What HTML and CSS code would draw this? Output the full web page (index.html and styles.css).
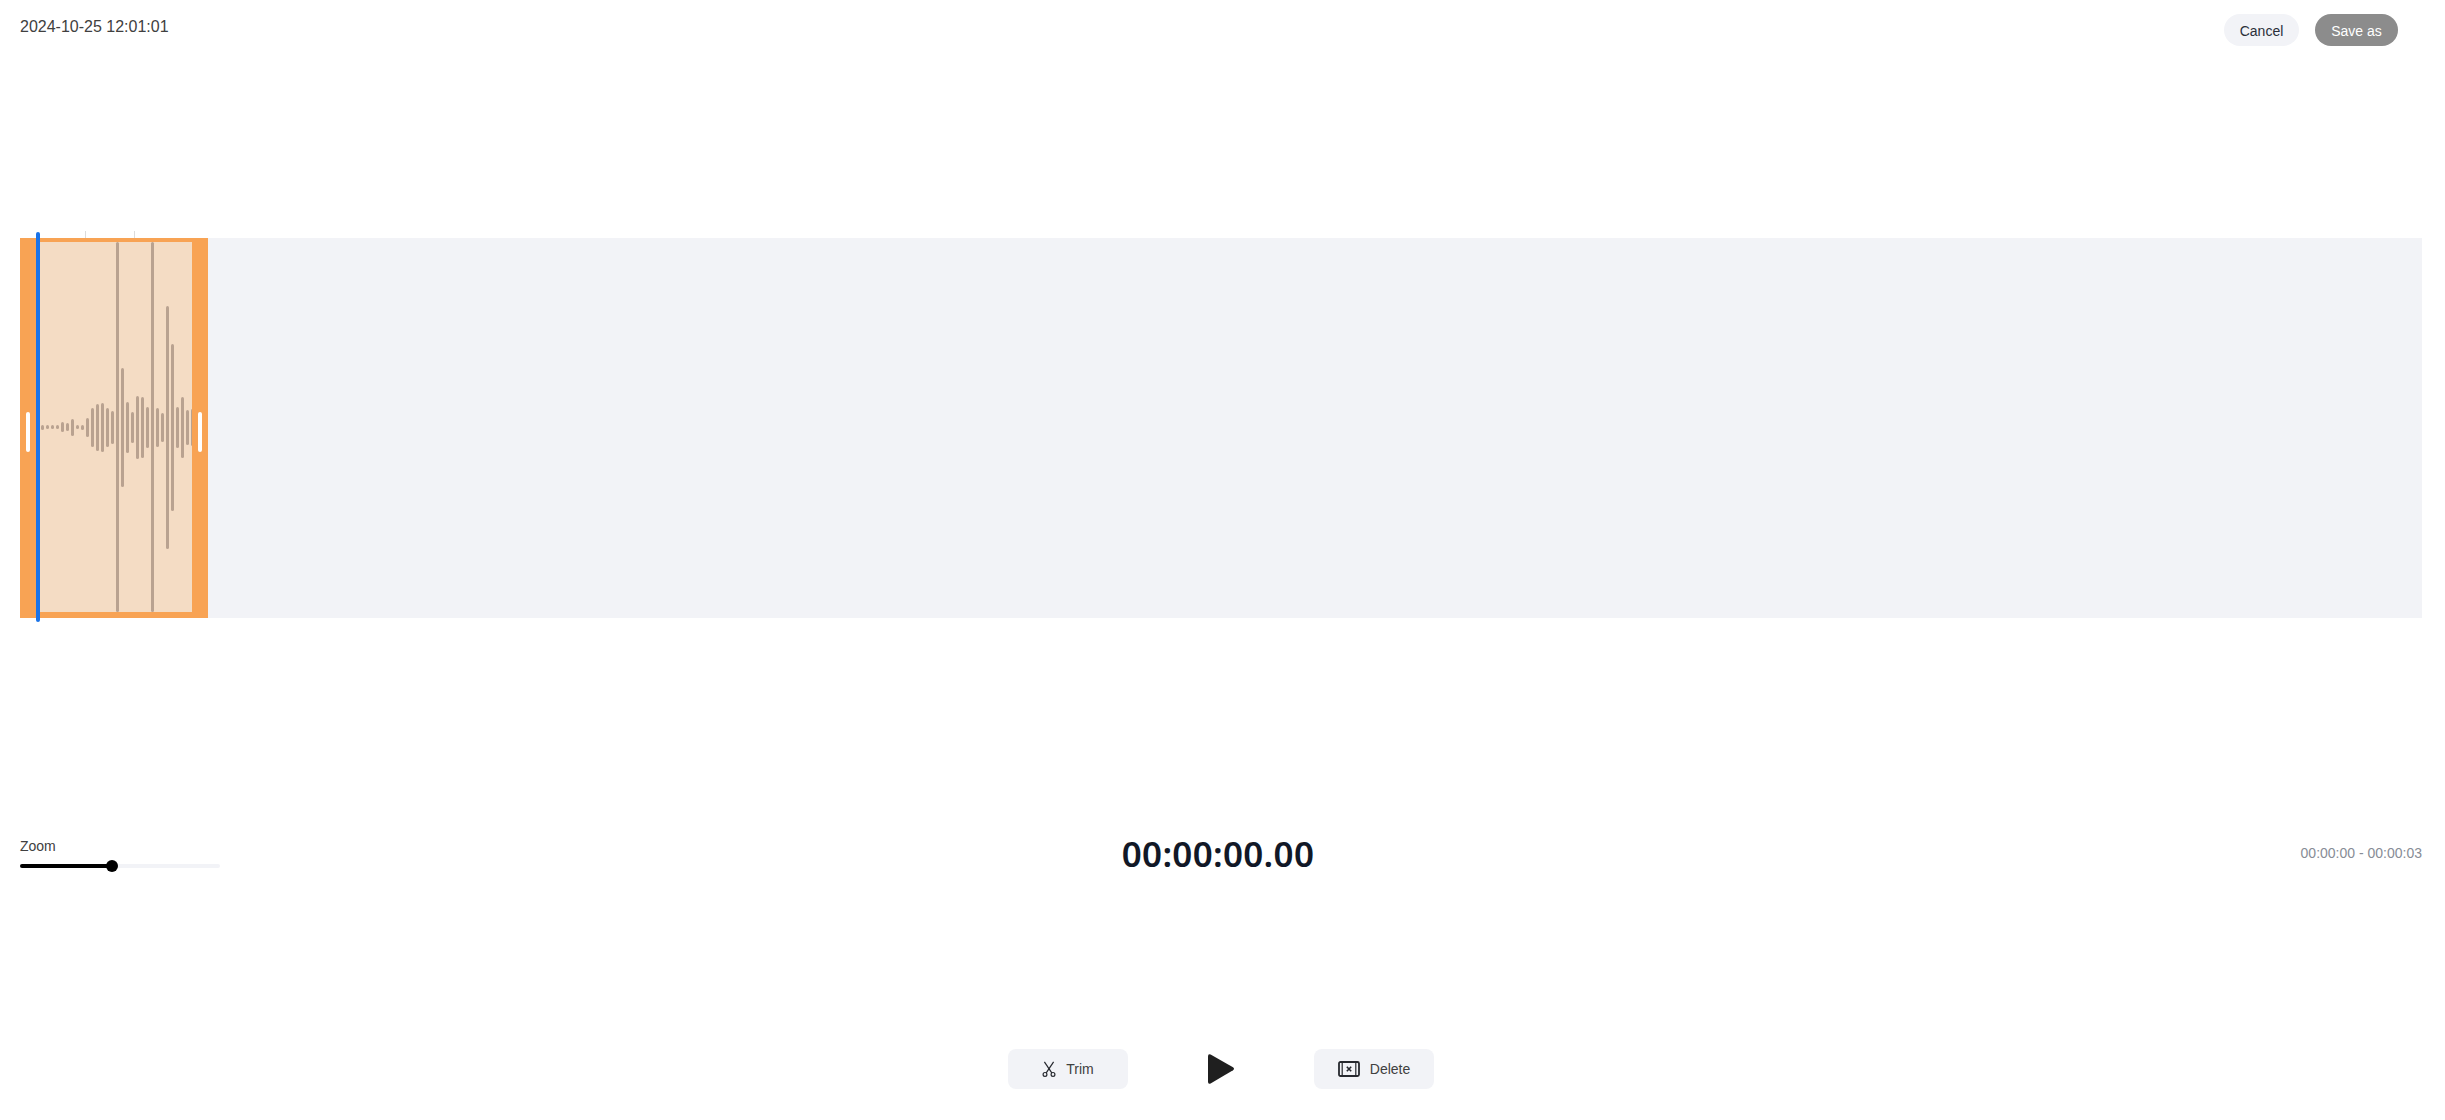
FILE: index.html
```html
<!DOCTYPE html>
<html lang="en">
<head>
<meta charset="utf-8">
<title>Audio editor</title>
<link rel="stylesheet" href="styles.css">
</head>
<body>
<main class="app">
  <header class="top">
    <div class="date">2024-10-25 12:01:01</div>
    <div class="actions">
      <button class="pill pill-cancel">Cancel</button>
      <button class="pill pill-save">Save as</button>
    </div>
  </header>

  <section class="track">
    <span class="tick tick-a"></span>
    <span class="tick tick-b"></span>
    <div class="selection">
      <span class="handle handle-left"></span>
      <div class="wave">
        <i style="height:5px"></i><i style="height:4px"></i><i style="height:4px"></i><i style="height:4px"></i><i style="height:10px"></i><i style="height:8px"></i><i style="height:17px"></i><i style="height:4px"></i><i style="height:5px"></i><i style="height:19px"></i><i style="height:39px"></i><i style="height:47px"></i><i style="height:49px"></i><i style="height:39px"></i><i style="height:33px"></i><i style="height:370px"></i><i style="height:119px"></i><i style="height:51px"></i><i style="height:31px"></i><i style="height:63px"></i><i style="height:61px"></i><i style="height:41px"></i><i style="height:370px"></i><i style="height:39px"></i><i style="height:29px"></i><i style="height:243px"></i><i style="height:167px"></i><i style="height:41px"></i><i style="height:61px"></i><i style="height:35px"></i><i style="height:37px"></i>
      </div>
      <span class="handle handle-right"></span>
    </div>
    <span class="playhead"></span>
  </section>

  <section class="info">
    <div class="zoom">
      <label class="zoom-label">Zoom</label>
      <div class="slider"><span class="slider-fill"></span><span class="slider-thumb"></span></div>
    </div>
    <div class="time">00:00:00.00</div>
    <div class="range">00:00:00 - 00:00:03</div>
  </section>

  <section class="controls">
    <button class="tool">
      <svg class="icon-trim" width="14" height="16" viewBox="0 0 14 16" fill="none" stroke="#26282e" stroke-width="1.2">
        <path d="M2.4 0.8 L9.8 11.8"/>
        <path d="M11.6 0.8 L4.2 11.8"/>
        <circle cx="3" cy="13.4" r="1.9"/>
        <circle cx="11" cy="13.4" r="1.9"/>
      </svg>
      <span>Trim</span>
    </button>
    <button class="play" aria-label="Play">
      <svg width="32" height="32" viewBox="0 0 32 32"><path d="M5.6 1.6 L28 14.2 Q30 15.7 28 17.2 L5.6 30.4 Q3 31.4 3 28.8 L3 3.2 Q3 0.6 5.6 1.6 Z" fill="#1f1f1f"/></svg>
    </button>
    <button class="tool">
      <svg class="icon-delete" width="22" height="16" viewBox="0 0 22 16" fill="none">
        <rect x="1" y="1" width="20" height="14" rx="1.5" stroke="#26282e" stroke-width="1.8"/>
        <path d="M4.2 1 V15 M17.8 1 V15" stroke="#26282e" stroke-width="1.2"/>
        <path d="M8.8 5.8 L13.2 10.2 M13.2 5.8 L8.8 10.2" stroke="#26282e" stroke-width="1.6"/>
      </svg>
      <span>Delete</span>
    </button>
  </section>
</main>
</body>
</html>
```
FILE: styles.css
```css
* { box-sizing: border-box; }
html, body { margin: 0; padding: 0; background: #fff; }
body { font-family: "Liberation Sans", Arial, sans-serif; color: #33363d; }

.app {
  width: 2445px;
  height: 1120px;
  padding: 0 23px 0 20px;
  display: flex;
  flex-direction: column;
  overflow: hidden;
}

button { font-family: inherit; border: 0; padding: 0; cursor: pointer; }

.top {
  height: 238px;
  flex: none;
  display: flex;
  justify-content: space-between;
  align-items: flex-start;
}
.date { font-size: 16px; line-height: 18px; margin-top: 18px; color: #404040; }
.actions { display: flex; gap: 16px; margin-top: 14px; margin-right: 24px; }
.pill { height: 32px; border-radius: 16px; font-size: 14px; padding-top: 2px; }
.pill-cancel { width: 75px; background: #f2f3f7; color: #2b2f3a; }
.pill-save { width: 83px; background: #8c8c8c; color: #fff; }

.track {
  position: relative;
  flex: none;
  height: 380px;
  background: #f2f3f7;
}
.tick { position: absolute; top: -7px; width: 1px; height: 7px; background: #dcdcdc; }
.tick-a { left: 65px; }
.tick-b { left: 114px; }

.selection {
  position: absolute;
  left: 0;
  top: 0;
  width: 188px;
  height: 380px;
  background: #f8a354;
  padding: 4px 16px 6px 20px;
}
.wave {
  height: 370px;
  background: #f4dcc4;
  padding-left: 1px;
  display: flex;
  align-items: center;
  gap: 2px;
  overflow: hidden;
}
.wave i { flex: none; display: block; width: 3px; border-radius: 1.5px; background: #b9a290; }
.handle {
  position: absolute;
  top: 174px;
  width: 4px;
  height: 40px;
  border-radius: 2px;
  background: #fff;
}
.handle-left { left: 6px; }
.handle-right { right: 6px; }
.playhead {
  position: absolute;
  left: 16px;
  top: -6px;
  width: 4px;
  height: 390px;
  border-radius: 2px;
  background: #1a73e8;
}

.info {
  flex: none;
  height: 60px;
  margin-top: 208px;
  display: grid;
  grid-template-columns: 1fr auto 1fr;
  align-items: center;
}
.zoom { width: 200px; padding-bottom: 6px; }
.zoom-label { display: block; font-size: 14px; line-height: 16px; color: #404040; }
.slider { position: relative; height: 4px; border-radius: 2px; background: #f2f3f7; margin-top: 10px; }
.slider-fill { position: absolute; left: 0; top: 0; width: 92px; height: 4px; border-radius: 2px; background: #000; }
.slider-thumb { position: absolute; left: 86px; top: -4px; width: 12px; height: 12px; border-radius: 50%; background: #000; }
.time { font-family: "Noto Sans", sans-serif; font-size: 35px; line-height: 40px; font-weight: 600; letter-spacing: 0.3px; color: #111827; margin: 0 6px 4px 0; }
.range { justify-self: end; font-size: 14px; color: #878c96; margin-bottom: 6px; }

.controls {
  flex: none;
  margin-top: 163px;
  height: 40px;
  display: flex;
  justify-content: center;
  align-items: center;
  gap: 77px;
}
.tool {
  width: 120px;
  height: 40px;
  border-radius: 8px;
  background: #f2f3f7;
  color: #404040;
  font-size: 14px;
  display: flex;
  justify-content: center;
  align-items: center;
  gap: 10px;
}
.play { width: 32px; height: 32px; background: none; display: flex; align-items: center; justify-content: center; }
```
